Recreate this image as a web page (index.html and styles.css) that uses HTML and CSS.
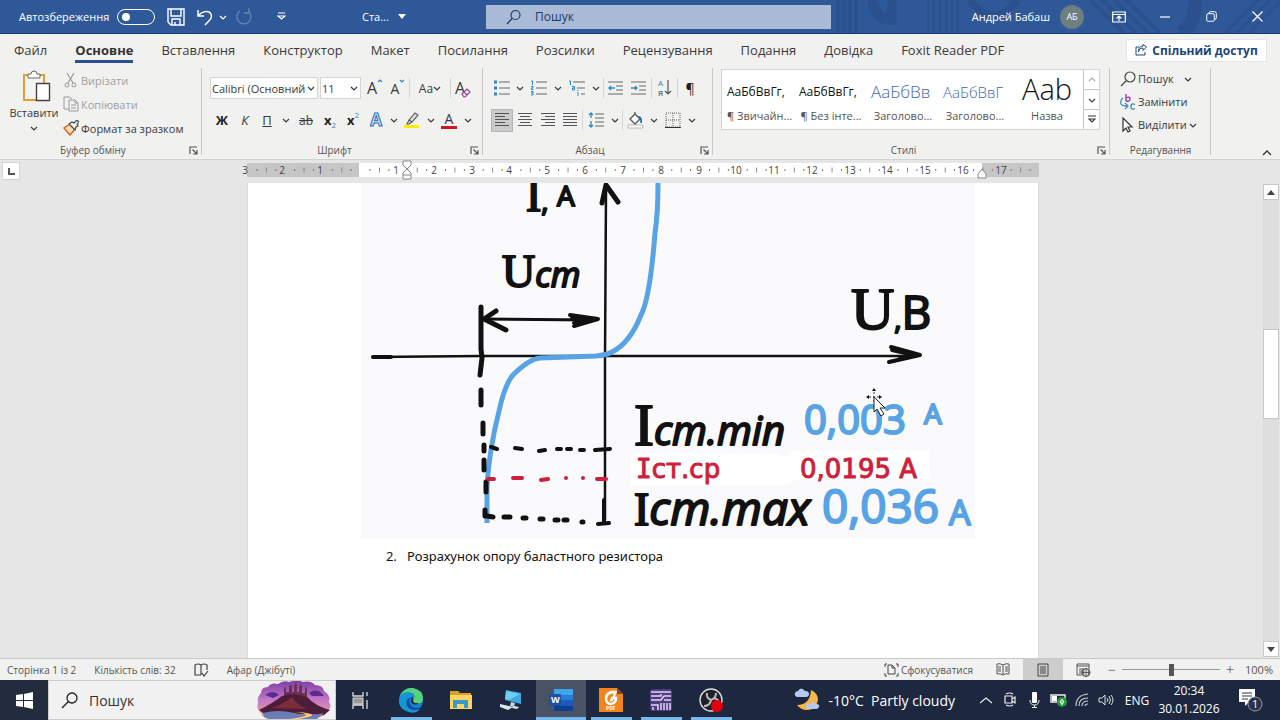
FILE: index.html
```html
<!DOCTYPE html>
<html lang="uk">
<head>
<meta charset="utf-8">
<title>Ста... - Word</title>
<link rel="stylesheet" href="styles.css">
</head>
<body>
<svg class="defs" aria-hidden="true">
  <symbol id="caret" viewBox="0 0 8 8"><path d="M1 3l3 3 3-3" fill="none" stroke="currentColor" stroke-width="1.2"/></symbol>
  <symbol id="launch" viewBox="0 0 9 9"><path d="M1 8V1h7M3.500 3.500l4 4M8 4v4H4" fill="none" stroke="#555" stroke-width="1.200"/></symbol>
</svg>

<header class="titlebar">
  <svg class="decor" viewBox="0 0 480 33" aria-hidden="true"><g fill="none" stroke="#284b86" opacity=".6"><path d="M38 0v33M44 0v33M50 0v33M56 0v33" stroke-width="3"/><path d="M72 0q3 16 14 20M92 0v25" stroke-width="10"/><path d="M128 0v33M134 0v33M140 0v33M146 0v33M152 0v33M158 0v33" stroke-width="2"/><path d="M170 0q22 30 48 0" stroke-width="7"/><path d="M290 0l34 33M302 0l34 33M314 0l34 33M326 0l34 33" stroke-width="4"/><path d="M395 0q2 22-14 33" stroke-width="13"/><path d="M425 33l33-33M437 33l33-33M449 33l31-31" stroke-width="3"/></g></svg>
  <label class="autosave">Автозбереження <input type="checkbox" class="toggle"></label>
  <div class="quick">
    <button aria-label="Зберегти"><svg width="18" height="18" viewBox="0 0 18 18"><path d="M1 1h16v16H4l-3-3zM4 1v7h10V1M5 17v-6h8v6M8 17v-3" fill="none" stroke="#fff" stroke-width="1.400"/></svg></button>
    <button aria-label="Скасувати"><svg width="18" height="18" viewBox="0 0 18 18"><path d="M2 2v6h6M2 8C6 3 13 2 15 6c2 5-3 7-6 11" fill="none" stroke="#fff" stroke-width="1.500"/></svg></button>
    <button class="narrow" aria-label="Список скасувань"><svg class="c"><use href="#caret"/></svg></button>
    <button class="dim" aria-label="Повторити"><svg width="18" height="18" viewBox="0 0 18 18"><path d="M5 3a7 7 0 1 0 9 1M14 0v5H9" fill="none" stroke="#87a1cc" stroke-width="1.300"/></svg></button>
    <button class="custom" aria-label="Настроїти панель"><svg width="9" height="9" viewBox="0 0 9 9"><path d="M1 1h7M1 4h7L4.500 7z" fill="none" stroke="#fff" stroke-width="1.200"/></svg></button>
  </div>
  <button class="docname">Ста... <svg width="8" height="5" viewBox="0 0 8 5"><path d="M0 0h8L4 5z" fill="#fff"/></svg></button>
  <label class="search"><svg width="16" height="16" viewBox="0 0 16 16"><circle cx="9.500" cy="6" r="4.500" fill="none" stroke="#1e3a6c" stroke-width="1.200"/><path d="M6 9.500L1 15" stroke="#1e3a6c" stroke-width="1.300"/></svg><input type="text" placeholder="Пошук" aria-label="Пошук"></label>
  <div class="account">Андрей Бабаш <span class="avatar">АБ</span></div>
  <div class="winbtns">
    <button aria-label="Параметри стрічки"><svg width="14" height="12" viewBox="0 0 14 12"><path d="M.7 1h12.600v10H.7zM.7 3.500h12.600M7 10V5M4.500 7.500L7 5l2.500 2.500" fill="none" stroke="#fff" stroke-width="1.200"/></svg></button>
    <button aria-label="Згорнути"><svg width="10" height="2" viewBox="0 0 10 2"><path d="M0 1h10" stroke="#fff" stroke-width="1.200"/></svg></button>
    <button aria-label="Відновити"><svg width="11" height="11" viewBox="0 0 11 11"><rect x=".7" y="2.700" width="7.600" height="7.600" rx="1.500" fill="none" stroke="#fff"/><path d="M3 2.500V2q0-1.300 1.300-1.300H8.500q1.800 0 1.800 1.800V7q0 1.300-1.300 1.300" fill="none" stroke="#fff"/></svg></button>
    <button aria-label="Закрити"><svg width="11" height="11" viewBox="0 0 11 11"><path d="M.5.5l10 10M10.500.5l-10 10" stroke="#fff" stroke-width="1.200"/></svg></button>
  </div>
</header>

<nav class="tabs">
  <a href="#">Файл</a><a href="#" class="active">Основне</a><a href="#">Вставлення</a><a href="#">Конструктор</a><a href="#">Макет</a><a href="#">Посилання</a><a href="#">Розсилки</a><a href="#">Рецензування</a><a href="#">Подання</a><a href="#">Довідка</a><a href="#">Foxit Reader PDF</a>
  <button class="share"><svg width="12" height="12" viewBox="0 0 12 12"><path d="M4 3H1v8h9V8M3.500 8C4 5 5.500 4 8 4V6.500L11.500 3 8 .5V2C5 2 3.500 4 3.500 8z" fill="none" stroke="#23437c"/></svg>Спільний доступ</button>
</nav>

<section class="ribbon">
  <div class="group clipboard">
    <div class="body">
      <button class="paste">
        <svg width="29" height="32" viewBox="0 0 29 32"><path d="M2 5h20v25H2z" fill="#fff4dd" stroke="#e39b3c" stroke-width="2"/><path d="M4 7h16v21H4z" fill="#f4f4f3"/><path d="M6 4h3q0-3 3-3t3 3h3v4H6z" fill="#fff" stroke="#666"/><path d="M14.500 13.500h13v17h-13z" fill="#fff" stroke="#444" stroke-width="1.400"/></svg>
        <span>Вставити</span><svg class="c"><use href="#caret"/></svg>
      </button>
      <div class="cmds">
        <button class="off"><svg width="16" height="16" viewBox="0 0 16 16"><path d="M4 1l6 10M11 1L5 11" stroke="#999" stroke-width="1.200"/><circle cx="4" cy="13" r="2" fill="none" stroke="#999"/><circle cx="11" cy="13" r="2" fill="none" stroke="#999"/></svg>Вирізати</button>
        <button class="off"><svg width="16" height="16" viewBox="0 0 16 16"><path d="M6 13H1V1h6l2 2M6 4h6l3 3v8H6zM12 4v3h3M8 9h5M8 12h5" fill="none" stroke="#999"/></svg>Копіювати</button>
        <button><svg width="16" height="16" viewBox="0 0 16 16"><path d="M7 4L1 8l6 7 5-6z" fill="#f8d9b8" stroke="#d06a22" stroke-width="1.500"/><path d="M6 4l6 6 1-3 2-1-1-2 2-2-2-2-3 3-2-1z" fill="#f1f1f0" stroke="#444" stroke-width="1.200"/></svg>Формат за зразком</button>
      </div>
    </div>
    <div class="caption">Буфер обміну<button aria-label="Буфер обміну: більше"><svg width="9" height="9"><use href="#launch"/></svg></button></div>
  </div>

  <div class="group font">
    <div class="body rows">
      <div class="row">
        <span class="combo name"><select aria-label="Шрифт"><option>Calibri (Основний</option></select><svg class="c"><use href="#caret"/></svg></span>
        <span class="combo size"><select aria-label="Розмір"><option>11</option></select><svg class="c"><use href="#caret"/></svg></span>
        <button class="w24 big" aria-label="Збільшити шрифт">A<svg width="6" height="12" viewBox="0 0 6 12"><path d="M1 5l2-2 2 2" fill="none" stroke="#2f86c6" stroke-width="1.200"/></svg></button>
        <button class="w22 mid" aria-label="Зменшити шрифт">A<svg width="6" height="12" viewBox="0 0 6 12"><path d="M1 3l2 2 2-2" fill="none" stroke="#2f86c6" stroke-width="1.200"/></svg></button>
        <i class="sep"></i>
        <button class="w36">Aa<svg class="c"><use href="#caret"/></svg></button>
        <i class="sep"></i>
        <button class="w24 big clear" aria-label="Очистити формат">A<svg width="10" height="14" viewBox="0 0 10 14"><path d="M1 8l5-5 3 3-5 5H3zM3 6l3 3" fill="#f1f1f0" stroke="#9a3a9e" stroke-width="1.200"/></svg></button>
      </div>
      <div class="row">
        <button class="w24"><b>Ж</b></button>
        <button class="w22"><em>К</em></button>
        <button class="w22"><u>П</u></button>
        <button class="w16" aria-label="Підкреслення"><svg class="c"><use href="#caret"/></svg></button>
        <button class="w24"><s>ab</s></button>
        <button class="w24"><b>x</b><sub>2</sub></button>
        <button class="w22"><b>x</b><sup>2</sup></button>
        <i class="sep"></i>
        <button class="w24"><span class="fx">A</span></button>
        <button class="w12" aria-label="Ефекти"><svg class="c"><use href="#caret"/></svg></button>
        <button class="w24" aria-label="Виділення"><svg width="18" height="18" viewBox="0 0 18 18"><path d="M1 14h15v3H1z" fill="#ffee00"/><path d="M6 9l6-7 3 2-6 7zM6 9l3 2-3 2H4z" fill="#ddd" stroke="#555" stroke-width="1.100"/></svg></button>
        <button class="w14" aria-label="Колір виділення"><svg class="c"><use href="#caret"/></svg></button>
        <button class="w22"><span class="fc">A</span></button>
        <button class="w16" aria-label="Колір шрифту"><svg class="c"><use href="#caret"/></svg></button>
      </div>
    </div>
    <div class="caption">Шрифт<button aria-label="Шрифт: більше"><svg width="9" height="9"><use href="#launch"/></svg></button></div>
  </div>

  <div class="group para">
    <div class="body rows">
      <div class="row">
        <button class="w22" aria-label="Маркери"><svg width="16" height="16" viewBox="0 0 16 16"><path d="M0 2h3M0 8h3M0 14h3" stroke="#2f86c6" stroke-width="3"/><path d="M5 2h11M5 8h11M5 14h11" stroke="#666"/></svg></button>
        <button class="w14" aria-label="Вид маркера"><svg class="c"><use href="#caret"/></svg></button>
        <button class="w24" aria-label="Нумерація"><svg width="16" height="16" viewBox="0 0 16 16"><path d="M5 2h11M5 8h11M5 14h11" stroke="#666"/><path d="M0 1h1.500v4M0 6.500h2v1.500H.5v1.500H2.500M0 11.500h2V15H0M0 13h2" fill="none" stroke="#2f86c6"/></svg></button>
        <button class="w14" aria-label="Вид нумерації"><svg class="c"><use href="#caret"/></svg></button>
        <button class="w24" aria-label="Багаторівневий список"><svg width="16" height="16" viewBox="0 0 16 16"><path d="M4 2h12M8 8h8M12 14h4" stroke="#666"/><path d="M0 1h1.500v4M3 6.500h2.500V10H3.500V8H5.500M9 12v4M9 10v1" fill="none" stroke="#2f86c6"/></svg></button>
        <button class="w14" aria-label="Вид списку"><svg class="c"><use href="#caret"/></svg></button>
        <i class="sep"></i>
        <button class="w24" aria-label="Зменшити відступ"><svg width="16" height="14" viewBox="0 0 16 14"><path d="M0 1h15M8 5h7M8 9h7M0 13h15" stroke="#666"/><path d="M7 7H1M3 5L1 7l2 2" fill="none" stroke="#2f86c6" stroke-width="1.300"/></svg></button>
        <button class="w22" aria-label="Збільшити відступ"><svg width="16" height="14" viewBox="0 0 16 14"><path d="M0 1h15M8 5h7M8 9h7M0 13h15" stroke="#666"/><path d="M0 7h6M4 5l2 2-2 2" fill="none" stroke="#2f86c6" stroke-width="1.300"/></svg></button>
        <i class="sep gap"></i>
        <button class="w24 sort" aria-label="Сортування"><span><i>А</i><i>Я</i></span><svg width="8" height="18" viewBox="0 0 8 18"><path d="M4 1v14M1 12l3 3 3-3" fill="none" stroke="#555" stroke-width="1.200"/></svg></button>
        <i class="sep"></i>
        <button class="w24 pil">¶</button>
      </div>
      <div class="row">
        <button class="w22 on" aria-label="Ліворуч"><svg width="16" height="16" viewBox="0 0 16 16"><path d="M1 1.500h14M1 4.500h10M1 7.500h14M1 10.500h10M1 13.500h14" stroke="#555"/></svg></button>
        <button class="w24" aria-label="По центру"><svg width="16" height="16" viewBox="0 0 16 16"><path d="M1 1.500h14M3 4.500h10M1 7.500h14M3 10.500h10M1 13.500h14" stroke="#555"/></svg></button>
        <button class="w22" aria-label="Праворуч"><svg width="16" height="16" viewBox="0 0 16 16"><path d="M1 1.500h14M5 4.500h10M1 7.500h14M5 10.500h10M1 13.500h14" stroke="#555"/></svg></button>
        <button class="w22" aria-label="По ширині"><svg width="16" height="16" viewBox="0 0 16 16"><path d="M1 1.500h14M1 4.500h14M1 7.500h14M1 10.500h14M1 13.500h14" stroke="#555"/></svg></button>
        <i class="sep gap"></i>
        <button class="w24" aria-label="Інтервал"><svg width="17" height="16" viewBox="0 0 17 16"><path d="M7 2h9M7 6h9M7 10h9M7 14h9" stroke="#666"/><path d="M3 6V1M1 3l2-2 2 2M3 9v6M1 13l2 2 2-2" fill="none" stroke="#2f86c6" stroke-width="1.300"/></svg></button>
        <button class="w14" aria-label="Вибір інтервалу"><svg class="c"><use href="#caret"/></svg></button>
        <i class="sep"></i>
        <button class="w24" aria-label="Заливка"><svg width="17" height="17" viewBox="0 0 17 17"><path d="M1 13h15v3H1z" fill="#fff" stroke="#aaa" stroke-width=".8"/><path d="M3 7l5-5 5 5-5 5zM8 2V0" fill="#fff" stroke="#555" stroke-width="1.300"/><path d="M11 5q4 0 3 6" fill="none" stroke="#2b6ca8" stroke-width="1.800"/></svg></button>
        <button class="w14" aria-label="Колір заливки"><svg class="c"><use href="#caret"/></svg></button>
        <button class="w24" aria-label="Межі"><svg width="16" height="16" viewBox="0 0 16 16"><path d="M1 1h14v14H1zM8 1v14M1 8h14" fill="none" stroke="#666" stroke-dasharray="1 1"/><path d="M0 15.500h16" stroke="#333"/></svg></button>
        <button class="w14" aria-label="Вид меж"><svg class="c"><use href="#caret"/></svg></button>
      </div>
    </div>
    <div class="caption">Абзац<button aria-label="Абзац: більше"><svg width="9" height="9"><use href="#launch"/></svg></button></div>
  </div>

  <div class="group styles">
    <div class="body">
      <div class="gallery">
        <button><span class="pv">АаБбВвГг,</span><span>¶ Звичайн...</span></button>
        <button><span class="pv">АаБбВвГг,</span><span>¶ Без інте...</span></button>
        <button><span class="pv h1">АаБбВв</span><span>Заголово...</span></button>
        <button><span class="pv h2">АаБбВвГ</span><span>Заголово...</span></button>
        <button><span class="pv ttl">Aab</span><span>Назва</span></button>
        <div class="spin">
          <button class="off" aria-label="Вгору"><svg class="c up"><use href="#caret"/></svg></button>
          <button aria-label="Вниз"><svg class="c"><use href="#caret"/></svg></button>
          <button aria-label="Усі стилі"><svg width="8" height="9" viewBox="0 0 8 9"><path d="M0 1h8M1 4l3 3 3-3z" fill="none" stroke="#333" stroke-width="1.200"/></svg></button>
        </div>
      </div>
    </div>
    <div class="caption">Стилі<button aria-label="Стилі: більше"><svg width="9" height="9"><use href="#launch"/></svg></button></div>
  </div>

  <div class="group editing">
    <div class="body cmds">
      <button><svg width="16" height="16" viewBox="0 0 16 16"><circle cx="10" cy="6" r="5" fill="none" stroke="#444" stroke-width="1.200"/><path d="M6 10l-5 5" stroke="#444" stroke-width="1.200"/></svg>Пошук <svg class="c far"><use href="#caret"/></svg></button>
      <button><svg width="16" height="16" viewBox="0 0 16 16"><path d="M6 0v7M6 4q4-2 4 1t-4 2" fill="none" stroke="#9a2fa8" stroke-width="1.300"/><path d="M15 10.500q-4-2-4 2t4 2" fill="none" stroke="#2f86c6" stroke-width="1.300"/><path d="M3 4Q0 6 1 10q1 2 6 2M5 9l3 3-3 3" fill="none" stroke="#2f86c6" stroke-width="1.200"/></svg>Замінити</button>
      <button><svg width="16" height="16" viewBox="0 0 16 16"><path d="M3 1v13l3-3 2 4 2-1-2-4h4z" fill="#fff" stroke="#333" stroke-width="1.200"/></svg>Виділити<svg class="c"><use href="#caret"/></svg></button>
    </div>
    <div class="caption">Редагування</div>
  </div>
  <button class="collapse" aria-label="Згорнути стрічку"><svg width="10" height="6" viewBox="0 0 10 6"><path d="M1 5l4-4 4 4" fill="none" stroke="#333" stroke-width="1.300"/></svg></button>
</section>

<main class="work">
  <div class="left"><button class="tabsel" aria-label="Тип табуляції"><svg width="7" height="7" viewBox="0 0 7 7"><path d="M1 0v6h6" fill="none" stroke="#555" stroke-width="2"/></svg></button></div>
  <div class="sheet">
    <svg class="ruler" viewBox="0 0 792 20" aria-label="Лінійка">
      <path d="M0 3h792v14H0z" fill="#c6c6c6"/><path d="M112 3h623v14H112z" fill="#fff"/>
      <path d="M0 10h792" pathLength="840" stroke="#888" stroke-width="5" stroke-dasharray="0 20 1 19"/>
      <path d="M0 10h792" pathLength="840" stroke="#777" stroke-width="2" stroke-dasharray="0 10 1 19 1 9"/>
      <g class="nums"><text x="-2" y="14">3</text><text x="35" y="14">2</text><text x="73" y="14">1</text><text x="149" y="14">1</text><text x="187" y="14">2</text><text x="225" y="14">3</text><text x="262" y="14">4</text><text x="300" y="14">5</text><text x="338" y="14">6</text><text x="376" y="14">7</text><text x="414" y="14">8</text><text x="452" y="14">9</text><text x="489" y="14">10</text><text x="527" y="14">11</text><text x="565" y="14">12</text><text x="603" y="14">13</text><text x="640" y="14">14</text><text x="678" y="14">15</text><text x="716" y="14">16</text><text x="754" y="14">17</text></g>
      <path d="M156 1h8v4l-4 4 4 4v6h-8v-6l4-4-4-4zM156 15h8M731 18v-4l4-5 4 5v4z" fill="#fff" stroke="#888"/>
    </svg>
    <article class="page">
      <svg class="picture" viewBox="361 183 614 356" role="img" aria-label="Вольт-амперна характеристика стабілітрона">
        <path d="M361 183h614v356H361z" fill="#fafafc"/>
        <path d="M631 454h150q4 8 12-3h136v28H800l-20 7H631z" fill="#fff"/>
        <g fill="none" stroke="#111" stroke-linecap="round" stroke-linejoin="round">
          <path d="M373 357h18" stroke-width="4"/><path d="M373 357l108-1h430" stroke-width="2.500"/>
          <path d="M606 190l-1 170v160" stroke-width="2.500"/>
          <path d="M602 203l4-18 12 17" stroke-width="5"/>
          <path d="M604 500v22M598 524l11-1" stroke-width="4"/>
          <path d="M481 307v42l1 9-2 17" stroke-width="5"/>
          <path d="M484 319l108 1" stroke-width="3"/><path d="M496 311l-12 8 22 11" stroke-width="5"/>
          <path d="M570 315l28 4-24 7M572 318l20 2-18 3" stroke-width="4"/>
          <path d="M891 347l29 8-31 7M892 350l22 5-14 3" stroke-width="4"/>
        </g>
        <path d="M658 183q0 31-3 50-5 65-14 82-11 28-29 37-5 3-16 4l-56 2q-11 1-27 17-8 9-14 36-10 40-12 75v37" fill="none" stroke="#57a3e6" stroke-width="5" stroke-linejoin="round"/>
        <g fill="none" stroke="#111" stroke-width="5" stroke-linecap="round">
          <path d="M481 390v15M483 423v11M484 445v6M484 460v10M486 482v10M485 510v6"/>
          <path d="M491 447l6 2M515 448l7 1M539 451l6-1M557 449h4M567 449h4M580 450h4M595 450l15-1" stroke-width="4"/>
          <path d="M487 516l6 1M504 517h6M523 518h3M540 519h3M555 520h3M564 520h3M582 522h1" stroke-width="5"/>
        </g>
        <path d="M488 479h6M513 478h9M541 480l7-1M566 478h0M583 478h0M597 479h9" stroke="#cf1f3c" stroke-width="4" stroke-linecap="round"/>
        <g class="hand">
          <text x="526" y="211" class="m"><tspan class="serif xl">I</tspan>,<tspan x="557" y="206">А</tspan></text>
          <text x="502" y="287"><tspan class="serif xl">U</tspan><tspan class="it l">ст</tspan></text>
          <text x="851" y="329" class="m"><tspan class="serif xxl">U</tspan>,<tspan class="xl">В</tspan></text>
          <text x="634" y="445"><tspan class="serif xxl">I</tspan><tspan class="it d">ст.min</tspan></text>
          <text x="634" y="525"><tspan class="serif xl">I</tspan><tspan class="it xl">ст.max</tspan></text>
        </g>
        <g class="hand blue">
          <text x="804" y="434" class="d">0,003</text><text x="924" y="424" class="m">А</text>
          <text x="822" y="523" class="xl">0,036</text><text x="949" y="525" class="l">А</text>
        </g>
        <g class="hand red"><text x="636" y="478"><tspan class="mono">I</tspan>ст.ср</text><text x="800" y="478">0,0195 А</text></g>
        <path d="M874 392v11M869 397h12" stroke="#333" stroke-dasharray="2 2" fill="none"/>
        <path d="M874 388l-2 3h4zM882 397l-3-2v4zM866 397l3-2v4z" fill="#111"/>
        <path d="M874 397v15l3-3 4 7 3-2-4-6h5z" fill="#fff" stroke="#222"/>
      </svg>
      <ol start="2"><li>Розрахунок опору баластного резистора</li></ol>
    </article>
  </div>
  <div class="scroll">
    <button aria-label="Прокрутити вгору"><svg width="8" height="5" viewBox="0 0 8 5"><path d="M0 5h8L4 0z" fill="#444"/></svg></button>
    <div class="track"><div class="thumb"></div></div>
    <button aria-label="Прокрутити вниз"><svg width="8" height="5" viewBox="0 0 8 5"><path d="M0 0h8L4 5z" fill="#444"/></svg></button>
  </div>
</main>

<footer class="status">
  <span>Сторінка 1 із 2</span><span>Кількість слів: 32</span>
  <svg width="15" height="14" viewBox="0 0 15 14"><path d="M7 2v10M7 2Q4 0 1 2v10h6M7 2q3-2 6 0v5M8 10l2 3 4-5" fill="none" stroke="#444" stroke-width="1.200"/></svg>
  <span>Афар (Джібуті)</span>
  <button class="focus"><svg width="15" height="14" viewBox="0 0 15 14"><path d="M3 1H1v3M1 10v3h2M12 1h2v3M14 10v3h-2M4 2h4l3 3v6H4zM8 2v3h3" fill="none" stroke="#444"/></svg>Сфокусуватися</button>
  <div class="views">
    <button aria-label="Читання"><svg width="14" height="13" viewBox="0 0 14 13"><path d="M7 2v10M7 2Q4 0 1 1v10q3-1 6 1 3-2 6-1V1q-3-1-6 1M2 4h3M2 6h3M2 8h3M9 4h3M9 6h3M9 8h3" fill="none" stroke="#555"/></svg></button>
    <button class="on" aria-label="Розмітка"><svg width="12" height="14" viewBox="0 0 12 14"><path d="M1 1h10v12H1zM3 4h6M3 6h6M3 8h6M3 10h6" fill="none" stroke="#444"/></svg></button>
    <button aria-label="Вебдокумент"><svg width="15" height="14" viewBox="0 0 15 14"><path d="M6 12H1V1h12v5M1 3h12M3 6h5M3 8h4M3 10h3" fill="none" stroke="#555"/><circle cx="10" cy="9.500" r="4" fill="#f1f1f0" stroke="#444"/><path d="M6 9.500h8M10 5.500v8M8 6q-1 4 0 7M12 6q1 4 0 7" fill="none" stroke="#444" stroke-width=".8"/></svg></button>
  </div>
  <div class="zoom"><button>−</button><input type="range" min="0" max="100" value="50" aria-label="Масштаб"><button>+</button><span>100%</span></div>
</footer>

<div class="taskbar">
  <button class="start" aria-label="Пуск"><svg width="17" height="17" viewBox="0 0 17 17"><path d="M0 3l7-1v6H0zM8 2l9-2v8H8zM0 9h7v6l-7-1zM8 9h9v8l-9-2z" fill="#fff"/></svg></button>
  <label class="tsearch"><svg width="17" height="17" viewBox="0 0 17 17"><circle cx="11" cy="6" r="5" fill="none" stroke="#222" stroke-width="1.300"/><path d="M7.500 9.500L1 16" stroke="#222" stroke-width="1.400"/></svg><input type="text" placeholder="Пошук" aria-label="Пошук у Windows">
    <svg width="75" height="38" viewBox="0 0 75 38"><defs><linearGradient id="sky" x2="0" y2="1"><stop offset="0" stop-color="#7b3fa3"/><stop offset=".5" stop-color="#c476c9"/><stop offset="1" stop-color="#f0a48c"/></linearGradient></defs><path d="M4 12Q4 6 11 6 14 1 21 3q5-4 11-2 8-3 14 0 8-2 12 3 8 0 9 6 7 4 5 11 4 6-3 10-1 5-8 5l-5 2H12q-7-1-8-6-5-4-3-10-1-6 3-10z" fill="url(#sky)"/><path d="M8 14q8-6 14 0l-6 3zM52 12q8-6 15 3H55z" fill="#5b2b8b"/><path d="M27 15V8l1-3 1 3v3h3V6l2-3 1 3v5h2V5l2-4 1 4v6h2V6l2-3 1 3v6h3V8l1-3 1 3v8z" fill="#6d304f"/><path d="M2 29q14-7 23-14 12-4 25 1 8 9 23 13l-6 5q-31-2-58 0z" fill="#4b1d38"/><path d="M14 27q11-3 21-11 5 8 15 12z" fill="#7c2d3b"/><path d="M6 32q15-4 31 0t30 0l-7 6H12q-6-1-6-6z" fill="#6a7db4"/><path d="M35 31q15 1 14 3t-17 4h10q17-3 12-5t-19-2z" fill="#ffc571"/></svg>
  </label>
  <div class="apps">
    <button aria-label="Подання завдань"><svg width="18" height="17" viewBox="0 0 18 17"><path d="M1 0v4h10V0M1 17v-4h10v4M15 0v4M15 8v9" fill="none" stroke="#ddd" stroke-width="1.300"/><path d="M1 6h10v6H1z" fill="#999" stroke="#ddd"/></svg></button>
    <button class="run" aria-label="Edge"><svg width="26" height="26" viewBox="0 0 26 26"><circle cx="13" cy="13" r="12" fill="#1683d0"/><path d="M2 9Q6 0 15 1q10 2 10 10 0 6-7 6-4 0-3-3 2-3-1-5Q9 5 2 9z" fill="#55d37a"/><path d="M1 14Q2 5 10 5q7 0 7 6-2-2-5-1-6 3-3 9 4 7 13 3-5 6-12 2.500Q1 22 1 14z" fill="#1597d4"/><path d="M9 13q-2 9 8 10 4 0 6-3-8 3-11-3-2-4 1-6-3 0-4 2z" fill="#134b9a"/><path d="M14 9q2 2 1 5 1 3 7 2-8 4-9-2z" fill="#202a42"/></svg></button>
    <button aria-label="Провідник"><svg width="22" height="20" viewBox="0 0 22 20"><path d="M0 1h8l2 2h11v5H0z" fill="#d99f26"/><path d="M0 5h22v14H0z" fill="#ffd562"/><path d="M3 18v-8h15v8h-4v-4H7v4z" fill="#3a9ac5"/></svg></button>
    <button aria-label="Підключення"><svg width="24" height="22" viewBox="0 0 24 22"><path d="M7 1l15 3v11L6 11z" fill="#3da9e5"/><path d="M7 2l14 3-11 6-4-1z" fill="#73caf3"/><path d="M12 13l4 1-1 4-4-1z" fill="#c4d5e0"/><path d="M1 15l13 3-5 3-8-3zM15 17l5 1-2 2-5-1z" fill="#dde4ea"/></svg></button>
    <button class="run sel" aria-label="Word"><svg width="24" height="22" viewBox="0 0 24 22"><path d="M5 0h19v22H5z" fill="#185abd"/><path d="M5 0h19v6H5z" fill="#41a5ee"/><path d="M5 6h19v5H5z" fill="#2b7cd3"/><path d="M5 17h19v5H5z" fill="#103f91"/><rect y="5" width="12" height="12" rx="1" fill="#1d4fa2"/><text x="2" y="14" font-size="9" font-weight="700" fill="#fff">W</text></svg></button>
    <button class="run" aria-label="Foxit"><svg width="24" height="24" viewBox="0 0 24 24"><path d="M0 0h18l6 6v18H0z" fill="#f0841f"/><path d="M18 0v6h6z" fill="#8c4711"/><path d="M18 4Q8 3 7 10q0 6 5 6 5-1 5-6h-5M11 12q3 1 5-7" fill="none" stroke="#fff" stroke-width="2.500"/><text x="7" y="22" font-size="5" font-weight="700" fill="#fff">PDF</text></svg></button>
    <button class="run" aria-label="Схеми"><svg width="22" height="22" viewBox="0 0 22 22"><rect width="22" height="22" rx="3" fill="#503a80"/><path d="M1 3h20M1 7h10V5M1 11h10l3-4h7M14 11h7M1 16h7v5M3 21v-3M11 21v-7M14 14v7M17 14v7M20 14v7" fill="none" stroke="#e4d8f5" stroke-width="1.500"/></svg></button>
    <button class="run" aria-label="OBS"><svg width="24" height="24" viewBox="0 0 24 24"><circle cx="12" cy="12" r="11" fill="#20202a" stroke="#ddd" stroke-width="1.400"/><path d="M8 5q-1 5 4 7 5-4 8 2M12 12q-1 6-7 6M12 12q5-2 5-7" fill="none" stroke="#bbb" stroke-width="2"/><circle cx="18" cy="18" r="6" fill="#e3000c"/></svg></button>
  </div>
  <button class="weather"><svg width="26" height="24" viewBox="0 0 26 24"><path d="M17 2q7 3 7 10-2 10-11 10-6 0-10-5 13 0 14-15z" fill="#f5b64a"/><path d="M3 9Q0 8 1 5q1-2 3-2 3-5 7 0 4 0 4 3 0 3-3 3zM14 21q-3-1-2-4 2-2 4-1 4-4 6 0 4 0 3 3l-2 2z" fill="#b6c9ee"/></svg>-10°C&nbsp; Partly cloudy</button>
  <div class="tray">
    <button aria-label="Приховані значки"><svg width="12" height="7" viewBox="0 0 12 7"><path d="M0 6l6-5 6 5" fill="none" stroke="#eee" stroke-width="1.200"/></svg></button>
    <button aria-label="Камера"><svg width="13" height="16" viewBox="0 0 13 16"><path d="M1 4h7v7H1zM8 7l3-2v6L8 9M2 2q4-2 7 0M2 13q4 2 7 0" fill="none" stroke="#eee" stroke-width="1.200"/></svg></button>
    <button aria-label="Мікрофон"><svg width="11" height="16" viewBox="0 0 11 16"><rect x="3" width="5" height="11" rx="1" fill="#fff"/><path d="M1 8q0 5 4.500 5T10 8M5.500 13v2M3 15.500h5" fill="none" stroke="#eee"/></svg></button>
    <button aria-label="Батарея"><svg width="17" height="14" viewBox="0 0 17 14"><path d="M1 2h14v7H1z" fill="none" stroke="#eee" stroke-width="1.400"/><path d="M2 3h5v5H2z" fill="#fff"/><circle cx="12" cy="9" r="5" fill="#1d9a35"/><path d="M10 9q2-5 4 0-2 4-4 0M12 8v4" fill="none" stroke="#fff"/></svg></button>
    <button aria-label="Wi-Fi"><svg width="14" height="14" viewBox="0 0 14 14"><path d="M1 13Q1 2 13 1M4 13q0-8 9-8M7 13q0-5 6-5M10 13q0-2 3-2" fill="none" stroke="#ccc" stroke-width="1.200"/></svg></button>
    <button aria-label="Гучність"><svg width="16" height="14" viewBox="0 0 16 14"><path d="M1 5h3l3-3v10L4 9H1zM9 5q2 2 0 4M11 3q3 4 0 8M13 2q4 5 0 10" fill="none" stroke="#ddd"/></svg></button>
  </div>
  <button class="lang">ENG</button>
  <button class="clock"><span>20:34</span><span>30.01.2026</span></button>
  <button class="note" aria-label="Сповіщення"><svg width="26" height="26" viewBox="0 0 26 26"><path d="M1 2h16v13h-6l-4 4v-4H1z" fill="#fff"/><path d="M4 6h10M4 9h10M4 12h6" stroke="#334"/><circle cx="17" cy="17" r="7" fill="#28324a" stroke="#999"/><text x="14" y="21" font-size="11" fill="#fff">1</text></svg></button>
</div>
</body>
</html>
```
FILE: styles.css
```css
* { box-sizing: border-box; }
html, body { height: 100%; }
body { margin: 0; display: flex; flex-direction: column; overflow: hidden; background: #e6e6e6; color: #3a3a3a; font-family: "Open Sans", "Noto Sans", sans-serif; font-size: 12px; }
button, input, select { font: inherit; color: inherit; background: none; border: 0; padding: 0; margin: 0; outline: 0; }
button { display: flex; align-items: center; justify-content: center; white-space: nowrap; }
svg { flex: none; display: block; }
.defs { width: 0; height: 0; position: absolute; }
.c { width: 8px; height: 8px; }

.titlebar { position: relative; flex: none; height: 34px; display: flex; align-items: center; background: #2f5899; border-bottom: 1px solid #123a83; color: #fff; }
.titlebar > * { position: relative; flex: none; }
.titlebar .decor { position: absolute; right: 0; top: 0; width: 480px; height: 33px; }
.autosave { display: flex; align-items: center; padding-left: 19px; width: 155px; justify-content: space-between; font-size: 11px; white-space: nowrap; }
.toggle { appearance: none; width: 38px; height: 16px; border: 1px solid #fff; border-radius: 8px; display: flex; align-items: center; padding-left: 4px; }
.toggle::before { content: ""; width: 8px; height: 8px; border-radius: 4px; background: #fff; }
.quick { display: flex; padding-left: 6px; }
.quick button { width: 29px; height: 30px; }
.quick .narrow { width: 8px; }
.quick .dim { width: 34px; opacity: .6; }
.quick .custom { width: 40px; }
.docname { width: 44px; margin-left: 61px; justify-content: space-between; font-size: 11px; }
.titlebar .search { flex: 0 1 345px; height: 24px; margin-left: 80px; display: flex; align-items: center; gap: 13px; padding-left: 20px; background: #a9bbd6; color: #1e3a6c; }
.search input { flex: 1; min-width: 0; font-size: 12px; }
input::placeholder { color: inherit; opacity: 1; }
.account { margin-left: auto; display: flex; align-items: center; gap: 10px; padding-right: 12px; font-size: 11px; }
.avatar { width: 24px; height: 24px; border-radius: 12px; background: #6d7f80; display: flex; align-items: center; justify-content: center; font-size: 9px; }
.winbtns { display: flex; }
.winbtns button { width: 46px; height: 32px; }

.tabs { flex: none; display: flex; align-items: center; gap: 28px; height: 32px; padding: 0 13px 0 14px; background: #f1f1f0; font-size: 13px; }
.tabs a { color: #3a3a3a; text-decoration: none; line-height: 20px; padding-top: 2px; white-space: nowrap; border-bottom: 3px solid transparent; }
.tabs .active { font-weight: 700; border-color: #2b4f93; color: #333; }
.share { margin-left: auto; gap: 5px; width: 141px; height: 23px; background: #fff; color: #23437c; font-weight: 700; font-size: 12px; border: 1px solid #e6e6e6; }

.ribbon { flex: none; height: 94px; display: flex; background: #f1f1f0; border-bottom: 1px solid #d2d2d2; }
.group { flex: none; display: flex; flex-direction: column; position: relative; }
.group::after { content: ""; position: absolute; right: 0; top: 2px; bottom: 4px; width: 1px; background: #c8c8c8; }
.clipboard { width: 202px; } .font { width: 281px; } .para { width: 230px; } .styles { width: 397px; } .editing { width: 101px; }
.body { flex: 1; display: flex; min-height: 0; }
.caption { height: 16px; margin-bottom: 1px; display: flex; align-items: center; justify-content: center; font-size: 10px; color: #555; padding-right: 16px; position: relative; }
.caption button { position: absolute; right: 4px; }
.editing .caption { padding: 0; }
.paste { flex-direction: column; justify-content: flex-start; width: 56px; margin: 4px 3px 0 6px; font-size: 11px; gap: 2px; }
.paste span { line-height: 18px; }
.paste > svg:first-child { margin-left: 4px; }
.cmds { display: flex; flex-direction: column; font-size: 11px; padding-top: 2px; }
.cmds button { height: 24px; justify-content: flex-start; gap: 2px; }
.cmds .off { color: #a0a0a0; }
.cmds button svg:first-child { margin-left: -2px; }
.editing .cmds { padding: 1px 0 0 12px; }
.editing .cmds button { height: 23px; }
.editing .far { margin-left: 8px; }
.rows { flex-direction: column; gap: 8px; padding: 10px 8px 0; }
.row { display: flex; height: 24px; align-items: center; }
.row button { height: 23px; flex: none; }
.combo { position: relative; display: flex; align-items: center; height: 22px; background: #fff; border: 1px solid #d4d4d4; margin-right: 2px; }
.combo select { appearance: none; width: 100%; padding-left: 1px; font-size: 11px; }
.combo .c { position: absolute; right: 2px; }
.name { width: 108px; } .size { width: 41px; }
.name select { padding-right: 10px; }
.w12 { width: 12px; } .w14 { width: 14px; } .w16 { width: 16px; } .w22 { width: 22px; } .w24 { width: 24px; } .w36 { width: 40px; }
.sep { width: 1px; height: 20px; background: #d4d4d4; }
.gap { margin: 0 1px; }
.big { font-size: 16px; } .mid { font-size: 14px; }
.big svg, .mid svg { align-self: flex-start; }
.row .clear svg { align-self: flex-end; margin-left: -4px; }
.row b { font-size: 13px; color: #222; } .row u, .row em { font-size: 13px; }
.row sub, .row sup { font-size: 8px; color: #2f86c6; line-height: 8px; }
.row sub { align-self: flex-end; margin-bottom: 3px; } .row sup { align-self: flex-start; margin-top: 2px; }
.sort { gap: 1px; }
.sort span { display: flex; flex-direction: column; }
.sort i { font-style: normal; font-size: 8px; line-height: 10px; color: #2f86c6; }
.sort i:last-child { color: #333; }
.fx { font-size: 17px; font-weight: 700; line-height: 18px; color: #cfe4f6; -webkit-text-stroke: 1px #2370b8; }
.fc { font-size: 14px; line-height: 14px; width: 16px; border-bottom: 3px solid #d01325; }
.pil { font-size: 14px; color: #222; }
.on { background: #cbcbcb; border: 1px solid #b5b5b5; }
.gallery { display: flex; margin: 3px 0 0 8px; width: 379px; height: 61px; background: #fff; border: 1px solid #d4d4d4; padding-left: 1px; }
.gallery > button { flex: 1; min-width: 0; flex-direction: column; justify-content: flex-start; padding: 0 4px; overflow: hidden; font-size: 11px; color: #555; }
.gallery > button span { line-height: 18px; max-width: 100%; }
.gallery > button .pv { height: 37px; line-height: 44px; font-size: 12px; color: #111; align-self: stretch; text-align: left; }
.gallery > button .h1 { font-size: 17px; color: #4369a5; font-weight: 300; }
.gallery > button .h2 { font-size: 15px; color: #4369a5; font-weight: 300; }
.gallery > button .ttl { font-size: 29px; line-height: 38px; font-weight: 300; text-align: center; }
.spin { width: 16px; display: flex; flex-direction: column; }
.spin button { flex: 1; border-left: 1px solid #c6c6c6; border-bottom: 1px solid #c6c6c6; }
.spin button:last-child { border-bottom: 0; }
.spin .off { color: #aaa; }
.up { transform: rotate(180deg); }
.collapse { margin: auto 8px 3px auto; }

.work { flex: 1; min-height: 0; display: flex; background: #e6e6e6; }
.left { flex: 1; padding: 2px; }
.tabsel { width: 18px; height: 18px; background: #fff; border: 1px solid #d4d4d4; }
.sheet { flex: 0 1 792px; display: flex; flex-direction: column; min-height: 0; }
.ruler { width: 100%; height: 20px; margin-bottom: 3px; overflow: visible; }
.nums { font-size: 10px; fill: #444; text-anchor: middle; }
.page { flex: 1; min-height: 0; overflow: hidden; background: #fff; padding: 0 63px 0 113px; border: 1px solid #dadada; border-width: 0 1px; }
.picture { width: 100%; height: auto; }
.page ol { margin: 8px 0 0; padding-left: 46px; font-family: "Noto Sans", "Open Sans", sans-serif; font-size: 13px; line-height: 18px; color: #111; }
.page li::marker { content: "2.   "; }
.hand { fill: #111; stroke: #111; stroke-width: 2px; stroke-linejoin: round; font-family: "Open Sans", sans-serif; font-size: 26px; }
.hand .m { font-size: 28px; } .hand .l { font-size: 34px; } .hand .d { font-size: 40px; } .hand .xl { font-size: 46px; } .hand .xxl { font-size: 60px; }
.hand .it { font-style: italic; }
.hand .mono { font-family: "DejaVu Sans Mono", monospace; }
.hand .serif { font-family: "Liberation Serif", serif; }
.blue { fill: #57a3e6; stroke: #57a3e6; }
.red { fill: #cf1f3c; stroke: #cf1f3c; stroke-width: 1px; font-family: "DejaVu Sans", sans-serif; }
.scroll { flex: 1; display: flex; flex-direction: column; align-items: flex-end; padding: 24px 1px 1px 0; max-width: 241px; }
.scroll button { width: 16px; height: 16px; background: #fff; border: 1px solid #c8c8c8; }
.track { flex: 1; width: 16px; background: #dedede; display: flex; flex-direction: column; }
.thumb { margin-top: 129px; height: 90px; background: #fff; border: 1px solid #c8c8c8; }

.status { flex: none; height: 22px; display: flex; align-items: center; padding: 0 7px; gap: 18px; background: #f1f1f0; border-top: 1px solid #c8c8c8; font-size: 10px; color: #555; white-space: nowrap; }
.focus { margin-left: auto; gap: 2px; }
.views { display: flex; align-self: stretch; margin-left: -8px; }
.views button { width: 40px; }
.views .on { border: 0; background: #cdcdcd; }
.zoom { display: flex; align-items: center; gap: 5px; margin-left: -14px; }
.zoom button { width: 10px; font-size: 14px; color: #777; line-height: 14px; }
.zoom input { appearance: none; width: 98px; height: 12px; background: linear-gradient(#999, #999) center / 100% 1px no-repeat; }
.zoom input::-webkit-slider-thumb { appearance: none; width: 5px; height: 12px; background: #555; }
.zoom span { margin-left: 5px; font-size: 11px; }

.taskbar { flex: none; height: 40px; display: flex; background: #1d2740; color: #fff; }
.start { width: 48px; background: #222c3c; }
.tsearch { width: 288px; display: flex; align-items: center; gap: 11px; padding-left: 12px; padding-right: 3px; background: #f1f1f1; border: 1px solid #ccc; color: #333; }
.tsearch input { flex: 1; min-width: 0; font-size: 14px; }
.apps { display: flex; }
.apps button { width: 50px; position: relative; }
.run::after { content: ""; position: absolute; left: 5px; right: 4px; bottom: 0; height: 3px; background: #76b9ed; }
.apps .sel { background: #4a5266; }
.sel::after { left: 0; right: 0; }
.weather { margin-left: auto; gap: 8px; font-size: 14px; }
.tray { display: flex; margin-left: 19px; }
.tray button { width: 24px; }
.lang { width: 38px; font-size: 12px; }
.clock { flex-direction: column; width: 66px; font-size: 12px; line-height: 18px; }
.note { width: 58px; }
```
